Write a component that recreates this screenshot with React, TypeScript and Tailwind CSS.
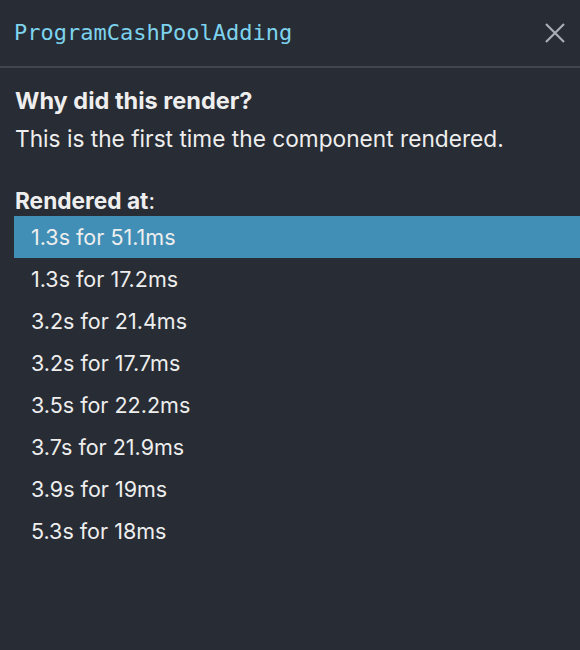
import React from "react";

const rows = [
  "1.3s for 51.1ms",
  "1.3s for 17.2ms",
  "3.2s for 21.4ms",
  "3.2s for 17.7ms",
  "3.5s for 22.2ms",
  "3.7s for 21.9ms",
  "3.9s for 19ms",
  "5.3s for 18ms",
];

export default function App() {
  return (
    <div
      className="w-[580px] h-[650px] bg-[#282c34] text-[#eeeeee] overflow-hidden"
      style={{ fontFamily: "Inter, 'Noto Sans', sans-serif" }}
    >
      <div className="h-[68px] flex items-center justify-between pl-[14px] pr-[14px] border-b-2 border-[#41454d]">
        <span
          className="text-[22px] text-[#7dd3ee] -mt-[1px]"
          style={{ fontFamily: "'DejaVu Sans Mono', monospace" }}
        >
          ProgramCashPoolAdding
        </span>
        <svg width="22" height="22" viewBox="0 0 22 22">
          <path d="M2 2 L20 20 M20 2 L2 20" stroke="#a9adb5" strokeWidth="2.2" strokeLinecap="butt" />
        </svg>
      </div>
      <div className="pt-[14px] pl-[14px]">
        <div className="text-[23.5px] leading-[38px] font-bold pl-[1px]">Why did this render?</div>
        <div className="text-[22.7px] leading-[38px] pl-[1px]">
          This is the first time the component rendered.
        </div>
        <div className="mt-[29px] text-[22.7px] leading-[28px] pl-[1px]">
          <span className="font-bold">Rendered at</span>:
        </div>
        <div className="mt-[1px]">
          {rows.map((r, i) => (
            <div
              key={i}
              className={
                "h-[42px] flex items-center pl-[17px] text-[21.5px] " +
                (i === 0 ? "bg-[#418fb6]" : "")
              }
            >
              {r}
            </div>
          ))}
        </div>
      </div>
    </div>
  );
}
